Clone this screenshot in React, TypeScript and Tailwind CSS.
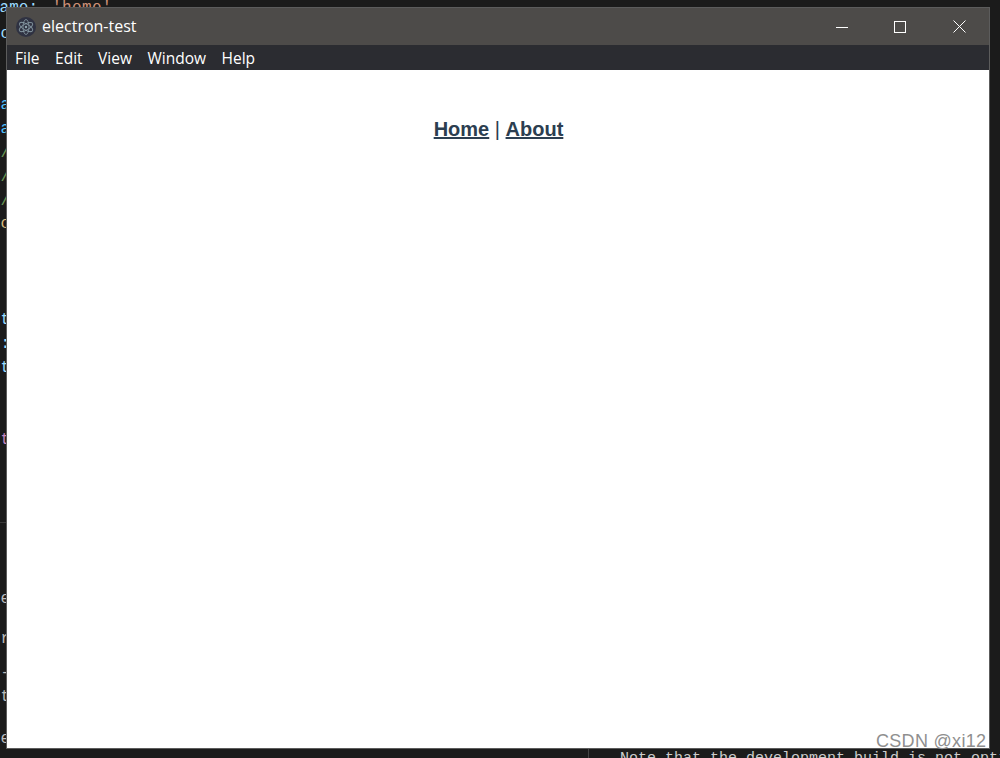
import React from "react";

const rows: [number, string, string][] = [
  [22, "co", "text-[#9cdcfe]"],
  [93, "pa", "text-[#4fc1ff]"],
  [117, "na", "text-[#4fc1ff]"],
  [141, "/", "text-[#6a9955]"],
  [165, "/", "text-[#6a9955]"],
  [189, "/", "text-[#6a9955]"],
  [212, "co", "text-[#d7ba7d]"],
  [308, "t", "text-[#9cdcfe]"],
  [332, "s:", "text-[#9cdcfe]"],
  [356, "nt", "text-[#9cdcfe]"],
  [428, "rt", "text-[#c586c0]"],
  [587, "ce", "text-[#bbbbbb]"],
  [627, "er", "text-[#bbbbbb]"],
  [661, "-", "text-[#bbbbbb]"],
  [685, "t", "text-[#bbbbbb]"],
  [727, "e", "text-[#bbbbbb]"],
];

const menu = ["File", "Edit", "View", "Window", "Help"];

function ElectronIcon() {
  return (
    <svg width="20" height="20" viewBox="0 0 20 20" fill="none" className="shrink-0">
      <circle cx="10" cy="10" r="10" fill="#2f3242" />
      <g stroke="#8fa3ad" strokeOpacity="0.8" strokeWidth="0.9">
        <ellipse cx="10" cy="10" rx="7.5" ry="3" transform="rotate(30 10 10)" />
        <ellipse cx="10" cy="10" rx="7.5" ry="3" transform="rotate(90 10 10)" />
        <ellipse cx="10" cy="10" rx="7.5" ry="3" transform="rotate(150 10 10)" />
      </g>
      <circle cx="10" cy="10" r="1.2" fill="#8fa3ad" />
    </svg>
  );
}

export default function App() {
  return (
    <div className="relative w-[1000px] h-[758px] overflow-hidden bg-[#1b1b1b] font-['Liberation_Mono',monospace] text-[16px]">
      {/* editor behind the window */}
      <div className="absolute left-[52px] top-[-4px] whitespace-pre text-[#ce9178] leading-[24px] tracking-[0.4px]">'home'</div>
      <div className="absolute left-[-10px] top-[-4px] whitespace-pre text-[#9cdcfe] leading-[24px]">name:</div>
      <div className="absolute left-0 top-0 w-[7px] h-full overflow-hidden">
        {rows.map(([y, t, c]) => (
          <div
            key={y}
            style={{ top: y }}
            className={`absolute right-[-3px] whitespace-pre leading-[24px] ${c}`}
          >
            {t}
          </div>
        ))}
      </div>
      <div className="absolute left-0 top-[522px] w-[7px] h-px bg-[#3a3a3a]" />
      <div className="absolute left-[588px] top-[748px] w-px h-[10px] bg-[#444444]" />
      <div className="absolute left-[620px] top-[749px] whitespace-pre leading-[20px] text-[15px] text-[#cccccc]">
        Note that the development build is not optimized.
      </div>

      {/* window */}
      <div className="absolute left-[6px] top-[7px] w-[984px] h-[742px] border border-[#5c5c5c] flex flex-col font-['Open_Sans',sans-serif]">
        <div className="h-[37px] bg-[#4d4b49] flex items-center pl-[9px] text-white shrink-0">
          <ElectronIcon />
          <span className="ml-[6px] mb-[2px] text-[16px] leading-none">electron-test</span>
          <div className="ml-auto flex items-center h-full">
            <div className="w-[56px] flex justify-center">
              <svg width="12" height="12" viewBox="0 0 12 12"><path d="M0 6.5h12" stroke="#fff" strokeWidth="1" /></svg>
            </div>
            <div className="w-[60px] flex justify-center">
              <svg width="12" height="12" viewBox="0 0 12 12"><rect x="0.5" y="0.5" width="11" height="11" fill="none" stroke="#fff" strokeWidth="1" /></svg>
            </div>
            <div className="w-[59px] flex justify-center">
              <svg width="13" height="13" viewBox="0 0 13 13"><path d="M0.5 0.5l12 12M12.5 0.5l-12 12" stroke="#fff" strokeWidth="1" /></svg>
            </div>
          </div>
        </div>
        <div className="h-[25px] bg-[#2b2c31] flex items-center pl-[8px] pt-[2px] gap-[15.5px] text-white text-[15.5px] shrink-0">
          {menu.map((m) => (
            <span key={m} className="leading-none">{m}</span>
          ))}
        </div>
        <div className="flex-1 bg-white pt-[48px] pl-[1px] text-center font-['Liberation_Sans',sans-serif] text-[20px] leading-[23px] text-[#2c3e50]">
          <a className="font-bold underline">Home</a> | <a className="font-bold underline">About</a>
        </div>
      </div>

      <div className="absolute left-[876px] top-[731px] font-['Liberation_Sans',sans-serif] text-[18px] leading-[21px] tracking-[0.3px] text-[#8f8f8f]">
        CSDN @xi12
      </div>
    </div>
  );
}
